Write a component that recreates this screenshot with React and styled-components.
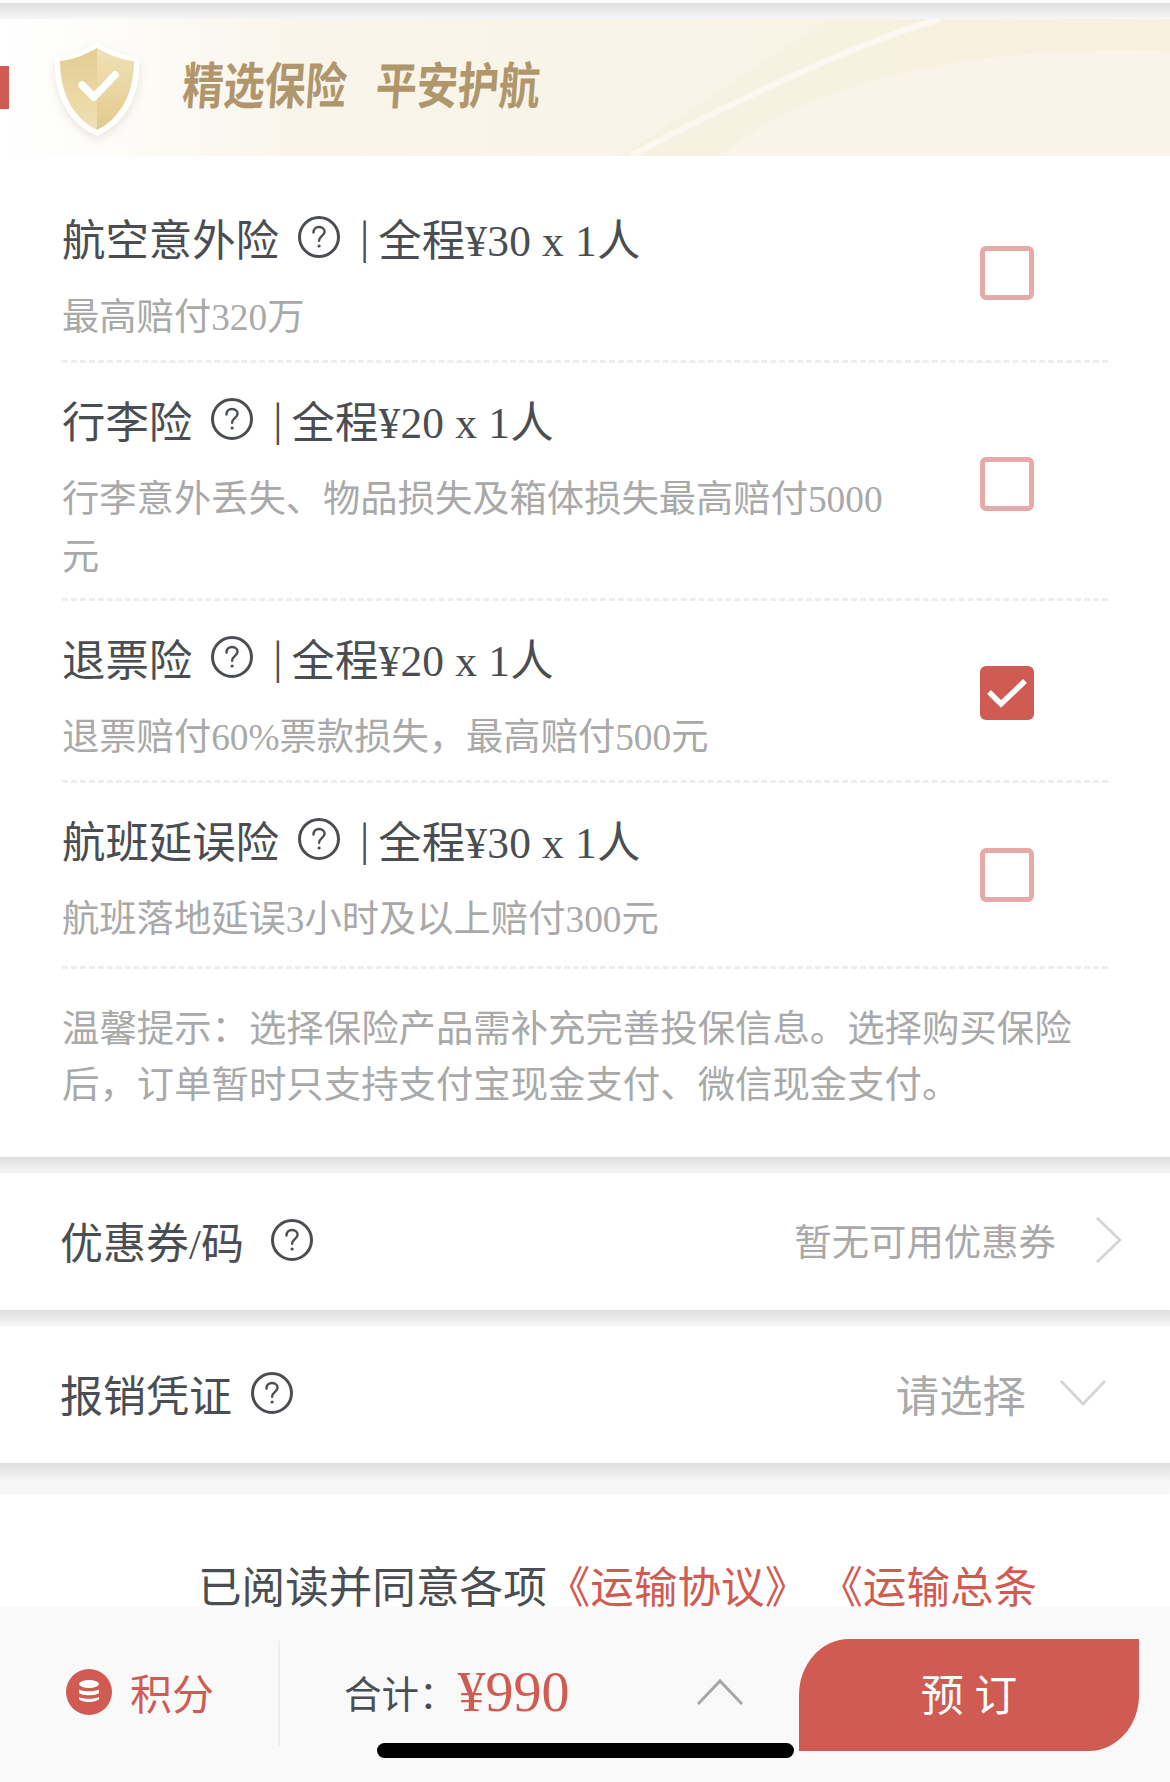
import React from "react";
import styled, { createGlobalStyle } from "styled-components";

const Global = createGlobalStyle`
  html, body { margin: 0; padding: 0; background: #fff; }
  * { box-sizing: border-box; }
`;

const FONT = `"Liberation Serif", "Noto Sans CJK SC", serif`;
const SANS = `"Noto Sans CJK SC", sans-serif`;
const RED = "#d05b52";
const INK = "#4a4e52";
const MUTED = "#a9a9a9";

const Page = styled.div`
  position: relative;
  width: 1170px;
  height: 1782px;
  overflow: hidden;
  background: #fff;
  font-family: ${FONT};
  color: ${INK};
`;
const TopEdge = styled.div`
  height: 3px;
  background: #fff;
`;
const Gutter = styled.div`
  height: ${(p) => p.$h}px;
  background: linear-gradient(#dfdfdf, #f6f6f6 ${(p) => (p.$long ? "60%" : "100%")}, #f7f7f7);
`;
const Banner = styled.div`
  position: relative;
  height: 137px;
  display: flex;
  align-items: flex-start;
  padding: 20px 0 0 52px;
  background: linear-gradient(90deg, #fff 0, #fdfcf9 120px, #f9f5ea 300px, #f8f2e3 100%);
  overflow: hidden;
`;
const BannerArt = styled.svg`
  position: absolute;
  inset: 0;
`;
const Tab = styled.span`
  position: absolute;
  left: 0;
  top: 47px;
  width: 9px;
  height: 43px;
  background: ${RED};
`;
const Shield = styled.svg`
  position: relative;
  flex: none;
  width: 90px;
  height: 100px;
  filter: drop-shadow(0 4px 5px rgba(150, 130, 90, 0.18));
`;
const BannerTitle = styled.div`
  position: relative;
  margin: 18px 0 0 41px;
  font: 700 50px/1 ${SANS};
  color: #b0966c;
  white-space: pre;
  transform: skewX(-4deg) scaleX(0.82);
  transform-origin: left center;
  word-spacing: 6.5px;
`;
const List = styled.div`
  padding: 25px 62px 0;
`;
const Item = styled.div`
  display: flex;
  align-items: center;
  justify-content: space-between;
  padding: 25px 74px ${(p) => p.$pb}px 0;
  border-bottom: 3px dashed #eeeeee;
`;
const ItemText = styled.div`
  width: 830px;
`;
const Title = styled.div`
  display: flex;
  align-items: center;
  height: 62px;
  font-size: 43.4px;
  white-space: pre;
`;
const Price = styled.span`
  letter-spacing: 0.2px;
`;
const Sep = styled.span`
  font-size: 46px;
  margin: 0 9px 0 19px;
`;
const Sub = styled.div`
  margin-top: 21px;
  font-size: 37.3px;
  line-height: 58px;
  color: ${MUTED};
`;
const Help = styled.svg`
  flex: none;
  width: 44px;
  height: 44px;
  margin-left: ${(p) => p.$ml}px;
`;
const Check = styled.span`
  flex: none;
  width: 54px;
  height: 54px;
  margin-bottom: 8px;
  border-radius: 6px;
  display: flex;
  align-items: center;
  justify-content: center;
  border: ${(p) => (p.$on ? "none" : "5px solid #e5aaa7")};
  background: ${(p) => (p.$on ? RED : "#fff")};
`;
const Tip = styled.div`
  padding: 33px 62px 43px;
  font-size: 37.4px;
  line-height: 56px;
  color: ${MUTED};
`;
const Row = styled.div`
  height: 137px;
  display: flex;
  align-items: center;
  padding: 0 ${(p) => p.$pr}px 4px 60px;
  font-size: 43px;
`;
const RowValue = styled.span`
  margin-left: auto;
  color: ${MUTED};
  font-size: ${(p) => p.$size}px;
`;
const Arrow = styled.svg`
  flex: none;
  margin-left: ${(p) => p.$ml}px;
`;
const Agree = styled.div`
  margin-top: 64px;
  padding-left: 198px;
  font-size: 43.6px;
  line-height: 60px;
  white-space: pre;
`;
const RedText = styled.span`
  color: ${RED};
`;
const Footer = styled.div`
  position: absolute;
  left: 0;
  right: 0;
  bottom: 0;
  height: 175px;
  display: flex;
  align-items: flex-start;
  background: #f9f9f9;
`;
const Points = styled.div`
  width: 280px;
  height: 105px;
  margin-top: 34px;
  padding: 0 0 4px 66px;
  display: flex;
  align-items: center;
  border-right: 2px solid #eeeeee;
  color: ${RED};
  font-size: 42px;
  gap: 18px;
`;
const Total = styled.div`
  width: 519px;
  height: 105px;
  margin-top: 34px;
  padding: 0 38px 4px 64px;
  display: flex;
  align-items: center;
  font-size: 37.5px;
  white-space: pre;
`;
const Amount = styled.span`
  color: ${RED};
  font-size: 56px;
  margin-left: 1px;
`;
const Book = styled.div`
  width: 340px;
  height: 112px;
  margin-top: 32px;
  padding-bottom: 7px;
  border-radius: 50px 0 50px 0 / 56px 0 56px 0;
  background: ${RED};
  color: #fff;
  font-size: 43px;
  display: flex;
  align-items: center;
  justify-content: center;
  white-space: pre;
`;
const HomeBar = styled.span`
  position: absolute;
  left: 377px;
  top: 136px;
  width: 417px;
  height: 15px;
  border-radius: 8px;
  background: #000;
`;

const HelpIcon = ({ ml = 18 }) => (
  <Help $ml={ml} viewBox="0 0 44 44" fill="none" stroke={INK}>
    <circle cx="22" cy="22" r="19.5" strokeWidth="3" />
    <path d="M16.5 17.5c0-3.4 2.4-5.5 5.6-5.5 3.2 0 5.5 2 5.5 4.8 0 4-5.5 4.4-5.5 9" strokeWidth="2.4" strokeLinecap="round" />
    <circle cx="22.1" cy="31" r="1.6" fill={INK} stroke="none" />
  </Help>
);

const items = [
  { name: "航空意外险", price: "全程¥30 x 1人", sub: "最高赔付320万", pb: 13 },
  { name: "行李险", price: "全程¥20 x 1人", sub: "行李意外丢失、物品损失及箱体损失最高赔付5000元", pb: 11 },
  { name: "退票险", price: "全程¥20 x 1人", sub: "退票赔付60%票款损失，最高赔付500元", on: true, pb: 13 },
  { name: "航班延误险", price: "全程¥30 x 1人", sub: "航班落地延误3小时及以上赔付300元", pb: 17 },
];

export default function App() {
  return (
    <Page>
      <Global />
      <TopEdge />
      <Gutter $h={16} />
      <Banner>
        <BannerArt width="1170" height="137" viewBox="0 0 1170 137" fill="none">
          <path d="M620 137 L830 0 H1170 V137 Z" fill="#f6efdd" opacity="0.55" />
          <path d="M630 137 C720 90 850 25 940 0" stroke="#fbf8ef" strokeWidth="6" />
          <path d="M720 137 C800 70 950 25 1170 32 V137 Z" fill="#f9f4e7" />
        </BannerArt>
        <Tab />
        <Shield viewBox="0 0 90 100">
          <defs>
            <linearGradient id="shieldA" x1="0" y1="0" x2="0" y2="1">
              <stop offset="0" stopColor="#e3cc92" />
              <stop offset="1" stopColor="#f0e1b3" />
            </linearGradient>
            <linearGradient id="shieldB" x1="0" y1="0" x2="0" y2="1">
              <stop offset="0" stopColor="#f0e2b6" />
              <stop offset="1" stopColor="#e2ca8e" />
            </linearGradient>
          </defs>
          <path d="M45 3 C58 12 72 17 87 19 C89 56 74 84 45 97 C16 84 1 56 3 19 C18 17 32 12 45 3 Z" fill="#fff" />
          <path d="M45 9 C33 16 20 21 8 22 C8 54 21 79 45 91 Z" fill="url(#shieldA)" />
          <path d="M45 9 C57 16 70 21 82 22 C82 54 69 79 45 91 Z" fill="url(#shieldB)" />
          <path d="M30 46 L42 58 L63 36" fill="none" stroke="#fff" strokeWidth="7.5" strokeLinecap="round" strokeLinejoin="round" />
        </Shield>
        <BannerTitle>精选保险  平安护航</BannerTitle>
      </Banner>
      <List>
        {items.map((it) => (
          <Item key={it.name} $pb={it.pb}>
            <ItemText>
              <Title>
                {it.name}
                <HelpIcon />
                <Sep>|</Sep>
                <Price>{it.price}</Price>
              </Title>
              <Sub>{it.sub}</Sub>
            </ItemText>
            <Check $on={it.on}>
              {it.on && (
                <svg width="42" height="32" viewBox="0 0 42 32" fill="none">
                  <path d="M3 15 L15 27 L39 4" stroke="#fff" strokeWidth="5.5" />
                </svg>
              )}
            </Check>
          </Item>
        ))}
      </List>
      <Tip>温馨提示：选择保险产品需补充完善投保信息。选择购买保险后，订单暂时只支持支付宝现金支付、微信现金支付。</Tip>
      <Gutter $h={16} />
      <Row $pr={47}>
        优惠券/码
        <HelpIcon ml={26} />
        <RowValue $size={37.4}>暂无可用优惠券</RowValue>
        <Arrow $ml={39} width="28" height="48" viewBox="0 0 28 48" fill="none">
          <path d="M2 2 L25 24 L2 46" stroke="#d4d4d4" strokeWidth="2.6" />
        </Arrow>
      </Row>
      <Gutter $h={16} />
      <Row $pr={64}>
        报销凭证
        <HelpIcon ml={18} />
        <RowValue $size={43.4}>请选择</RowValue>
        <Arrow $ml={34} width="46" height="28" viewBox="0 0 46 28" fill="none">
          <path d="M1 2 L23 25 L45 2" stroke="#d4d4d4" strokeWidth="2.6" />
        </Arrow>
      </Row>
      <Gutter $h={31} $long />
      <Agree>
        已阅读并同意各项<RedText>《运输协议》 《运输总条</RedText>
      </Agree>
      <Footer>
        <Points>
          <svg width="46" height="46" viewBox="0 0 46 46">
            <circle cx="23" cy="23" r="23" fill={RED} />
            <ellipse cx="23" cy="15" rx="10" ry="4" fill="#fff" />
            <path d="M13 20.5c3 2.4 17 2.4 20 0v3.5c-3 3-17 3-20 0Z" fill="#fff" />
            <path d="M13 28c3 2.4 17 2.4 20 0v2c-3 4-17 4-20 0Z" fill="#fff" />
          </svg>
          积分
        </Points>
        <Total>
          合计：<Amount>¥990</Amount>
          <Arrow $ml={127} width="46" height="28" viewBox="0 0 46 28" fill="none">
            <path d="M1 26 L23 3 L45 26" stroke="#a5a5a5" strokeWidth="3" />
          </Arrow>
        </Total>
        <Book>预 订</Book>
        <HomeBar />
      </Footer>
    </Page>
  );
}
